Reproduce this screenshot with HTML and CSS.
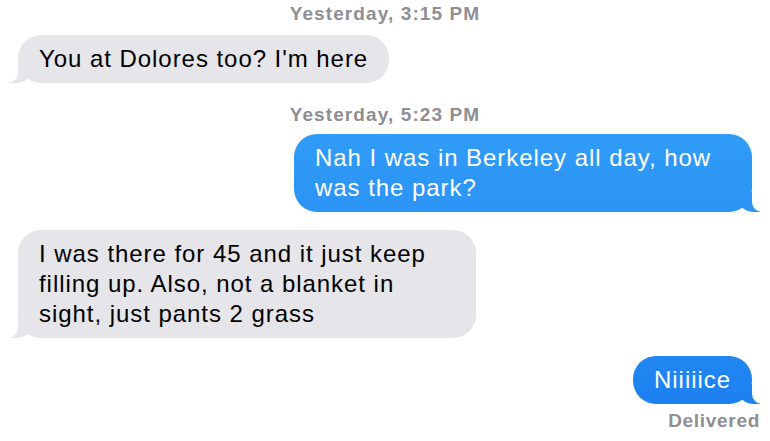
FILE: index.html
```html
<!DOCTYPE html>
<html lang="en">
<head>
<meta charset="UTF-8" />
<meta name="viewport" content="width=device-width, initial-scale=1" />
<title>Messages</title>
<link rel="stylesheet" href="styles.css">
</head>
<body>
  <div class="thread">
    <div class="stamp">Yesterday, 3:15 PM</div>
    <div class="bubble them first">You at Dolores too? I'm here</div>

    <div class="stamp">Yesterday, 5:23 PM</div>
    <div class="bubble me">Nah I was in Berkeley all day, how was the park?</div>

    <div class="bubble them">I was there for 45 and it just keep filling up. Also, not a blanket in sight, just pants 2 grass</div>

    <div class="bubble me">Niiiiice</div>
    <div class="status">Delivered</div>
  </div>
</body>
</html>
```
FILE: styles.css
```css
/* Reset and base */
* {
  box-sizing: border-box;
}
body {
  font-family: 'Liberation Sans', Arial, sans-serif;
  background: #ffffff;
  color: #000000;
  margin: 0;
  overflow: hidden;
}
.thread {
  display: flex;
  flex-direction: column;
  padding-top: 3px;
}

/* timestamps */
.stamp {
  align-self: center;
  color: #8e8e93;
  font-size: 19px;
  line-height: 22px;
  font-weight: 600;
  letter-spacing: 1.1px;
  margin-bottom: 10px;
}
.bubble + .stamp {
  margin-top: 21px;
  margin-bottom: 8px;
}

/* bubbles */
.bubble {
  position: relative;
  max-width: 458px;
  padding: 9px 21px;
  border-radius: 23px;
  font-size: 24px;
  line-height: 30px;
  letter-spacing: 0.95px;
}
.bubble + .bubble {
  margin-top: 18px;
}
.them {
  align-self: flex-start;
  margin-left: 18px;
  background: #e5e5ea;
  color: #000;
}
.me {
  align-self: flex-end;
  margin-right: 18px;
  background: linear-gradient(#3ba8fb, #1a7eef) fixed;
  color: #fff;
}

/* tails */
.bubble::before,
.bubble::after {
  content: "";
  position: absolute;
  bottom: 0;
  height: 20px;
}
.them::before {
  left: -8px;
  width: 22px;
  background: #e5e5ea;
  border-bottom-right-radius: 16px 14px;
}
.them::after {
  left: -11px;
  width: 11px;
  background: #fff;
  border-bottom-right-radius: 10px;
}
.me::before {
  right: -8px;
  width: 22px;
  background: linear-gradient(#3ba8fb, #1a7eef) fixed;
  border-bottom-left-radius: 16px 14px;
}
.me::after {
  right: -11px;
  width: 11px;
  background: #fff;
  border-bottom-left-radius: 10px;
}

.status {
  align-self: flex-end;
  margin-right: 10px;
  margin-top: 6px;
  color: #8e8e93;
  font-size: 19px;
  line-height: 22px;
  font-weight: 600;
  letter-spacing: 0.7px;
}
```
